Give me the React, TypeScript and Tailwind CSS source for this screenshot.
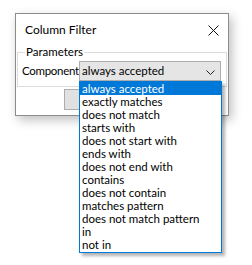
import React from 'react';

const options = [
  'always accepted',
  'exactly matches',
  'does not match',
  'starts with',
  'does not start with',
  'ends with',
  'does not end with',
  'contains',
  'does not contain',
  'matches pattern',
  'does not match pattern',
  'in',
  'not in',
];

export default function App() {
  const selected = 0;

  return (
    <div className="relative w-[252px] h-[265px] bg-white overflow-hidden font-['Lato',sans-serif] text-[11.5px] text-black pt-[13px] pl-[15px]">
      {/* Dialog window */}
      <div className="w-[214px] h-[103px] border border-[#8c8c8c] bg-white shadow-[3px_4px_10px_rgba(0,0,0,0.25)] flex flex-col">
        <div className="h-[31px] flex items-center justify-between pl-[9px] pr-[9px] pt-[1px]">
          <span className="leading-none text-[12px]">Column Filter</span>
          <svg width="11" height="11" viewBox="0 0 11 11" className="mt-[1px]">
            <path d="M0.5 0.5 L10.5 10.5 M10.5 0.5 L0.5 10.5" stroke="#111" strokeWidth="1" fill="none" />
          </svg>
        </div>

        {/* Parameters group */}
        <div className="relative mx-[1px] mt-[7px] h-[35px] border border-[#dcdcdc]">
          <span className="absolute -top-[9px] left-[7px] bg-white px-[1px] leading-[16px]">Parameters</span>
          <div className="flex items-center pl-[4px] pt-[8px]">
            <span className="w-[57px] leading-none whitespace-nowrap tracking-[-0.3px]">Component</span>
            <div className="w-[142px] h-[20px] bg-[#e5e5e5] border border-[#adadad] flex items-center justify-between pl-[2px] pr-[5px]">
              <span className="leading-none">{options[selected]}</span>
              <svg width="9" height="5" viewBox="0 0 9 5" className="mt-[2px]">
                <path d="M0.5 0.5 L4.5 4.5 L8.5 0.5" stroke="#222" strokeWidth="1" fill="none" />
              </svg>
            </div>
          </div>
        </div>

        {/* OK button, mostly hidden */}
        <div className="ml-[48px] mt-[2px] w-[75px] h-[21px] bg-[#e1e1e1] border border-[#adadad]" />
      </div>

      {/* Open dropdown list */}
      <div className="absolute left-[79px] top-[81px] w-[143px] h-[172px] border border-[#0078d7] bg-white shadow-[3px_3px_3px_rgba(0,0,0,0.3)] flex flex-col">
        {options.map((o, i) => (
          <div
            key={o}
            className={`h-[13px] leading-[13px] pl-[2px] whitespace-nowrap ${
              i === selected ? 'bg-[#0078d7] text-white' : 'text-black'
            }`}
          >
            {o}
          </div>
        ))}
      </div>
    </div>
  );
}
